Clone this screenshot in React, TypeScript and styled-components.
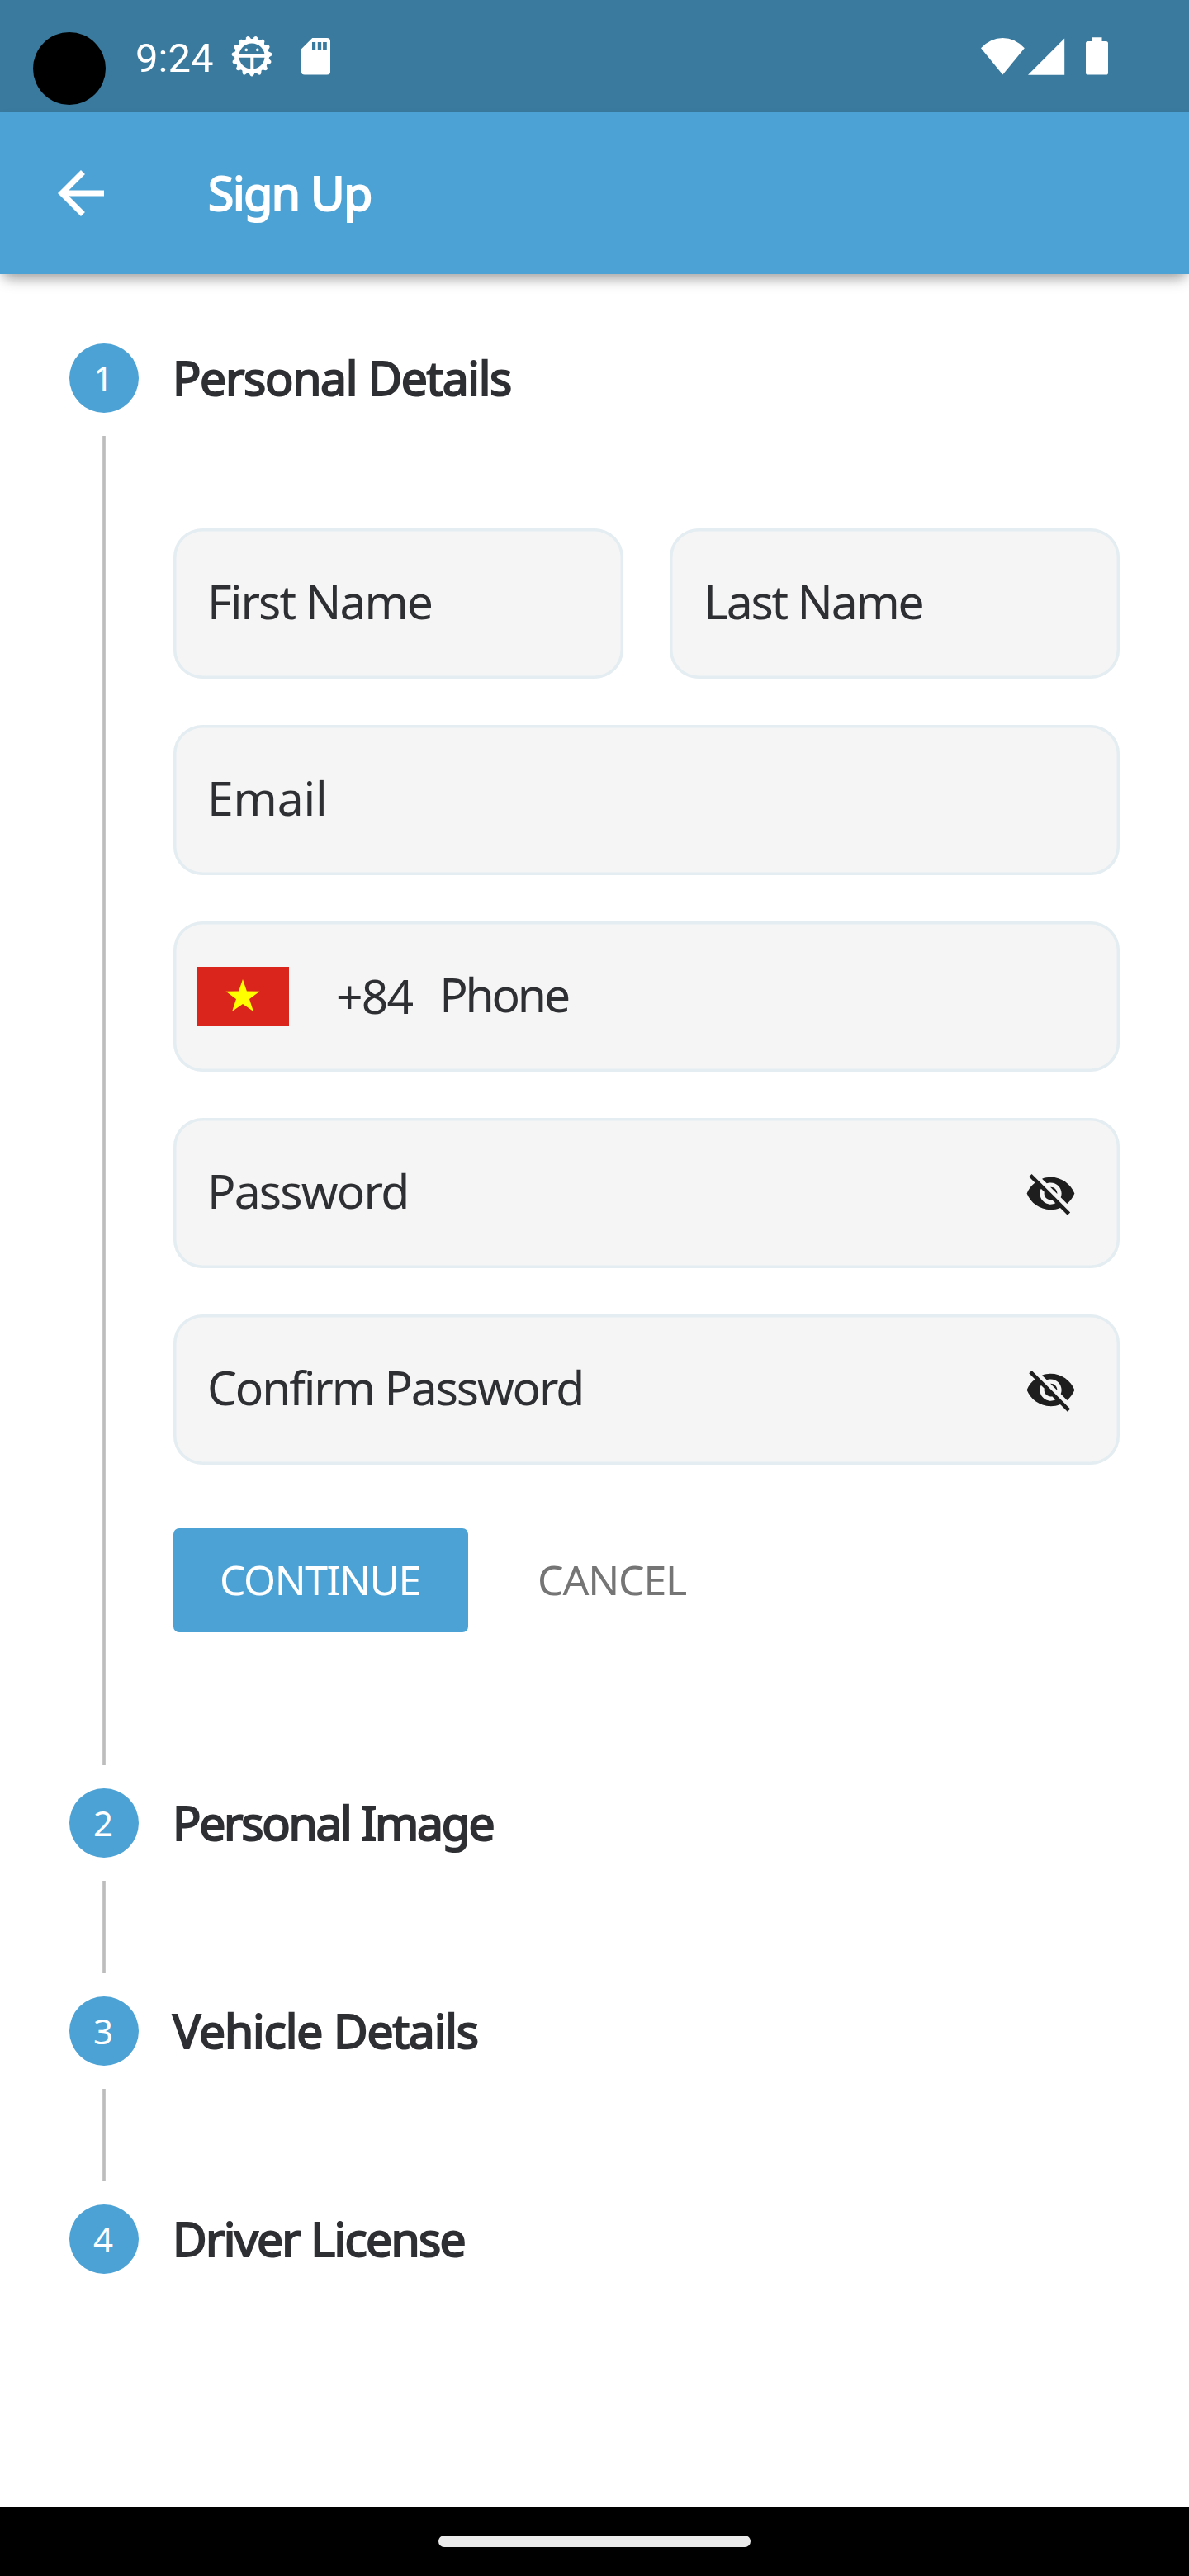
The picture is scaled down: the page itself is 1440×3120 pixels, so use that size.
import React from 'react';
import styled, { createGlobalStyle } from 'styled-components';

const blue = '#4ca2d5';
const ink = '#2e2f33';

const GlobalStyle = createGlobalStyle`
  *, *::before, *::after { box-sizing: border-box; }
  body {
    margin: 0;
    background: #fff;
    color: ${ink};
    font-family: "Noto Sans", "Open Sans", sans-serif;
  }
  svg { display: block; flex: none; }
`;

const Screen = styled.div`
  display: flex;
  flex-direction: column;
  width: 1440px;
  height: 3120px;
  overflow: hidden;
  background: #fff;
`;

const StatusBar = styled.header`
  display: flex;
  align-items: center;
  flex: none;
  height: 136px;
  padding: 0 98px 0 40px;
  background: #397a9e;
  color: #fff;
`;

const CameraHole = styled.div`
  width: 88px;
  height: 88px;
  margin: 30px 36px 0 0;
  border-radius: 50%;
  background: #000;
`;

const Clock = styled.time`
  margin-right: 22px;
  padding-top: 5px;
  font: 400 49px/58px Roboto, sans-serif;
`;

const StatusIcons = styled.div<{ $end?: boolean }>`
  display: flex;
  align-items: center;
  gap: ${(p) => (p.$end ? '0' : '35px')};
  margin-left: ${(p) => (p.$end ? 'auto' : '0')};
`;

const AppBar = styled.div`
  display: flex;
  align-items: center;
  flex: none;
  height: 196px;
  padding-left: 56px;
  background: ${blue};
  color: #fff;
  box-shadow: 0 12px 16px -6px rgba(0, 0, 0, 0.28), 0 5px 12px -2px rgba(0, 0, 0, 0.14);
`;

const BackButton = styled.button`
  width: 84px;
  height: 84px;
  margin: 0 112px 0 0;
  padding: 0;
  border: 0;
  background: none;
  color: inherit;
`;

const Title = styled.h1<{ $tracking: number }>`
  margin: 0;
  padding-bottom: 2px;
  font-size: 57px;
  font-weight: 400;
  line-height: 78px;
  letter-spacing: ${(p) => p.$tracking}px;
  white-space: nowrap;
  -webkit-text-stroke: 2px currentColor;
`;

const Stepper = styled.main`
  display: flex;
  flex-direction: column;
  flex: 1;
  padding: 84px 84px 0;
`;

const StepHeader = styled.div`
  display: flex;
  align-items: center;
  gap: 41px;
  height: 84px;
`;

const StepNumber = styled.span`
  display: flex;
  align-items: center;
  justify-content: center;
  width: 84px;
  height: 84px;
  border-radius: 50%;
  background: ${blue};
  color: #fff;
  font-size: 42px;
  line-height: 58px;
  padding-right: 2px;
`;

const StepBody = styled.div`
  display: grid;
  grid-template-columns: 84px 1fr;
  column-gap: 42px;
  min-height: 168px;
`;

const Rail = styled.div`
  width: 4px;
  margin: 28px 40px;
  background: #bdbdbd;
  border: solid #c8c8c8;
  border-width: 0 1px;
`;

const Form = styled.form`
  display: flex;
  flex-direction: column;
  gap: 56px;
  padding: 140px 0 189px;
`;

const FieldRow = styled.div`
  display: grid;
  grid-template-columns: 1fr 1fr;
  gap: 56px;
`;

const Field = styled.div<{ $inset?: number }>`
  display: flex;
  align-items: center;
  height: 182px;
  padding: 0 52px 0 ${(p) => p.$inset ?? 41}px;
  border-radius: 35px;
  background: #f5f5f5;
  box-shadow: inset 0 0 0 3.5px #e4edf2;
`;

const Label = styled.label<{ $tracking: number }>`
  flex: 1;
  padding-bottom: 6px;
  font-size: 57px;
  line-height: 78px;
  letter-spacing: ${(p) => p.$tracking}px;
  white-space: nowrap;
`;

const DialCode = styled.span`
  margin: 0 33px 0 57px;
  padding-bottom: 2px;
  font-size: 57px;
  line-height: 78px;
  letter-spacing: -1.9px;
`;

const Actions = styled.div`
  display: flex;
  gap: 28px;
  margin-top: 21px;
`;

const Button = styled.button<{ $primary?: boolean; $tracking: number }>`
  height: 126px;
  width: ${(p) => (p.$primary ? '357px' : 'auto')};
  padding: 0 56px 3px;
  border: 0;
  border-radius: 7px;
  background: ${(p) => (p.$primary ? blue : 'transparent')};
  color: ${(p) => (p.$primary ? '#fff' : '#757575')};
  font: inherit;
  font-size: 50px;
  letter-spacing: ${(p) => p.$tracking}px;
  text-align: left;
  white-space: nowrap;
`;

const NavBar = styled.footer`
  display: flex;
  justify-content: center;
  flex: none;
  height: 84px;
  padding-top: 35px;
  background: #000;
`;

const NavHandle = styled.div`
  width: 378px;
  height: 14px;
  border-radius: 7px;
  background: #ebebeb;
`;

const toothAngles = Array.from({ length: 15 }, (_, i) => i * 24);

const DebugGearIcon = () => (
  <svg width="50" height="50" viewBox="-25 -25 50 50" fill="none" stroke="#fff">
    <circle r="18.3" strokeWidth="5.4" />
    {toothAngles.map((a) => (
      <path key={a} d="M-4 19.5L-1.9 23.6Q0 25.6 1.9 23.6L4 19.5Z" fill="#fff" stroke="none" transform={`rotate(${a})`} />
    ))}
    <path d="M-17-0.2H17M0.3 0V17" strokeWidth="4" />
    <circle cx="-6.8" cy="-7.6" r="1.8" fill="#fff" stroke="none" />
    <circle cx="6.8" cy="-7.6" r="1.8" fill="#fff" stroke="none" />
  </svg>
);

const SdCardIcon = () => (
  <svg width="35" height="45" viewBox="0 0 35 45">
    <path
      fill="#fff"
      fillRule="evenodd"
      d="M13.3 0H31Q35 0 35 4V41Q35 44.6 31 44.6H4Q0 44.6 0 41V13.3ZM13 5V14H17.2V5ZM19.8 5V14H24.2V5ZM26.1 5V14H30.8V5Z"
    />
  </svg>
);

const WifiIcon = () => (
  <svg width="53" height="45" viewBox="0 0 53 45">
    <path d="M26.4 44.6L0 12.3Q11.5 0 26.4 0T52.8 12.3Z" fill="#fff" />
  </svg>
);

const SignalIcon = () => (
  <svg width="45" height="45" viewBox="0 0 45 45" style={{ marginLeft: 4 }}>
    <path d="M0 44.7L44.2 0.5V44.7Z" fill="#fff" />
  </svg>
);

const BatteryIcon = () => (
  <svg width="27" height="46" viewBox="0 0 27 46" style={{ marginLeft: 25 }}>
    <path d="M8 0.3H19.5V5H24.5Q27 5 27 7.6V43Q27 45.6 24.5 45.6H2.5Q0 45.6 0 43V7.6Q0 5 2.5 5H8Z" fill="#fff" />
  </svg>
);

const BackArrowIcon = () => (
  <svg width="84" height="84" viewBox="0 0 24 24">
    <path d="M20 11H7.83l5.59-5.59L12 4l-8 8 8 8 1.41-1.41L7.83 13H20v-2z" fill="currentColor" />
  </svg>
);

const HiddenEyeIcon = () => (
  <svg width="63" height="63" viewBox="0 0 24 24">
    <path
      fill="#1e1e1e"
      d="M12 7c2.76 0 5 2.24 5 5 0 .65-.13 1.26-.36 1.83l2.92 2.92c1.51-1.26 2.7-2.89 3.43-4.75-1.73-4.39-6-7.5-11-7.5-1.4 0-2.74.25-3.98.7l2.16 2.16C10.74 7.13 11.35 7 12 7zM2 4.27l2.28 2.28.46.46C3.08 8.3 1.78 10.02 1 12c1.73 4.39 6 7.5 11 7.5 1.55 0 3.03-.3 4.38-.84l.42.42L19.73 22 21 20.73 3.27 3 2 4.27zM7.53 9.8l1.55 1.55c-.05.21-.08.43-.08.65 0 1.66 1.34 3 3 3 .22 0 .44-.03.65-.08l1.55 1.55c-.67.33-1.41.53-2.2.53-2.76 0-5-2.24-5-5 0-.79.2-1.53.53-2.2zm4.31-.78l3.15 3.15.02-.16c0-1.66-1.34-3-3-3l-.17.01z"
    />
  </svg>
);

const VietnamFlag = () => (
  <svg width="112" height="72" viewBox="0 0 112 72">
    <rect width="112" height="72" fill="#da251d" />
    <path
      d="M56 15L60.9 29.5L76.5 29.7L64 39L68.9 54L56 44.9L43.1 54L48 39L35.5 29.7L51.1 29.5Z"
      fill="#ff0"
    />
  </svg>
);

const steps = [
  { title: 'Personal Details', tracking: -1.36 },
  { title: 'Personal Image', tracking: -2.3 },
  { title: 'Vehicle Details', tracking: -1.15 },
  { title: 'Driver License', tracking: -1.72 },
];

const SignUpForm = () => (
  <Form>
    <FieldRow>
      <Field><Label $tracking={-1.92}>First Name</Label></Field>
      <Field><Label $tracking={-2.19}>Last Name</Label></Field>
    </FieldRow>
    <Field><Label $tracking={-0.15}>Email</Label></Field>
    <Field $inset={28}>
      <VietnamFlag />
      <DialCode>+84</DialCode>
      <Label $tracking={-3.15}>Phone</Label>
    </Field>
    <Field>
      <Label $tracking={-1.8}>Password</Label>
      <HiddenEyeIcon />
    </Field>
    <Field>
      <Label $tracking={-2.15}>Confirm Password</Label>
      <HiddenEyeIcon />
    </Field>
    <Actions>
      <Button type="button" $primary $tracking={-1.49}>CONTINUE</Button>
      <Button type="button" $tracking={-1.18}>CANCEL</Button>
    </Actions>
  </Form>
);

export default function App() {
  return (
    <Screen>
      <GlobalStyle />
      <StatusBar>
        <CameraHole />
        <Clock>9:24</Clock>
        <StatusIcons>
          <DebugGearIcon />
          <SdCardIcon />
        </StatusIcons>
        <StatusIcons $end>
          <WifiIcon />
          <SignalIcon />
          <BatteryIcon />
        </StatusIcons>
      </StatusBar>
      <AppBar>
        <BackButton type="button" aria-label="Back"><BackArrowIcon /></BackButton>
        <Title $tracking={-1.4}>Sign Up</Title>
      </AppBar>
      <Stepper>
        {steps.map((step, i) => (
          <section key={step.title}>
            <StepHeader>
              <StepNumber>{i + 1}</StepNumber>
              <Title as="h2" $tracking={step.tracking}>{step.title}</Title>
            </StepHeader>
            {i < steps.length - 1 && (
              <StepBody>
                <Rail />
                {i === 0 && <SignUpForm />}
              </StepBody>
            )}
          </section>
        ))}
      </Stepper>
      <NavBar><NavHandle /></NavBar>
    </Screen>
  );
}
